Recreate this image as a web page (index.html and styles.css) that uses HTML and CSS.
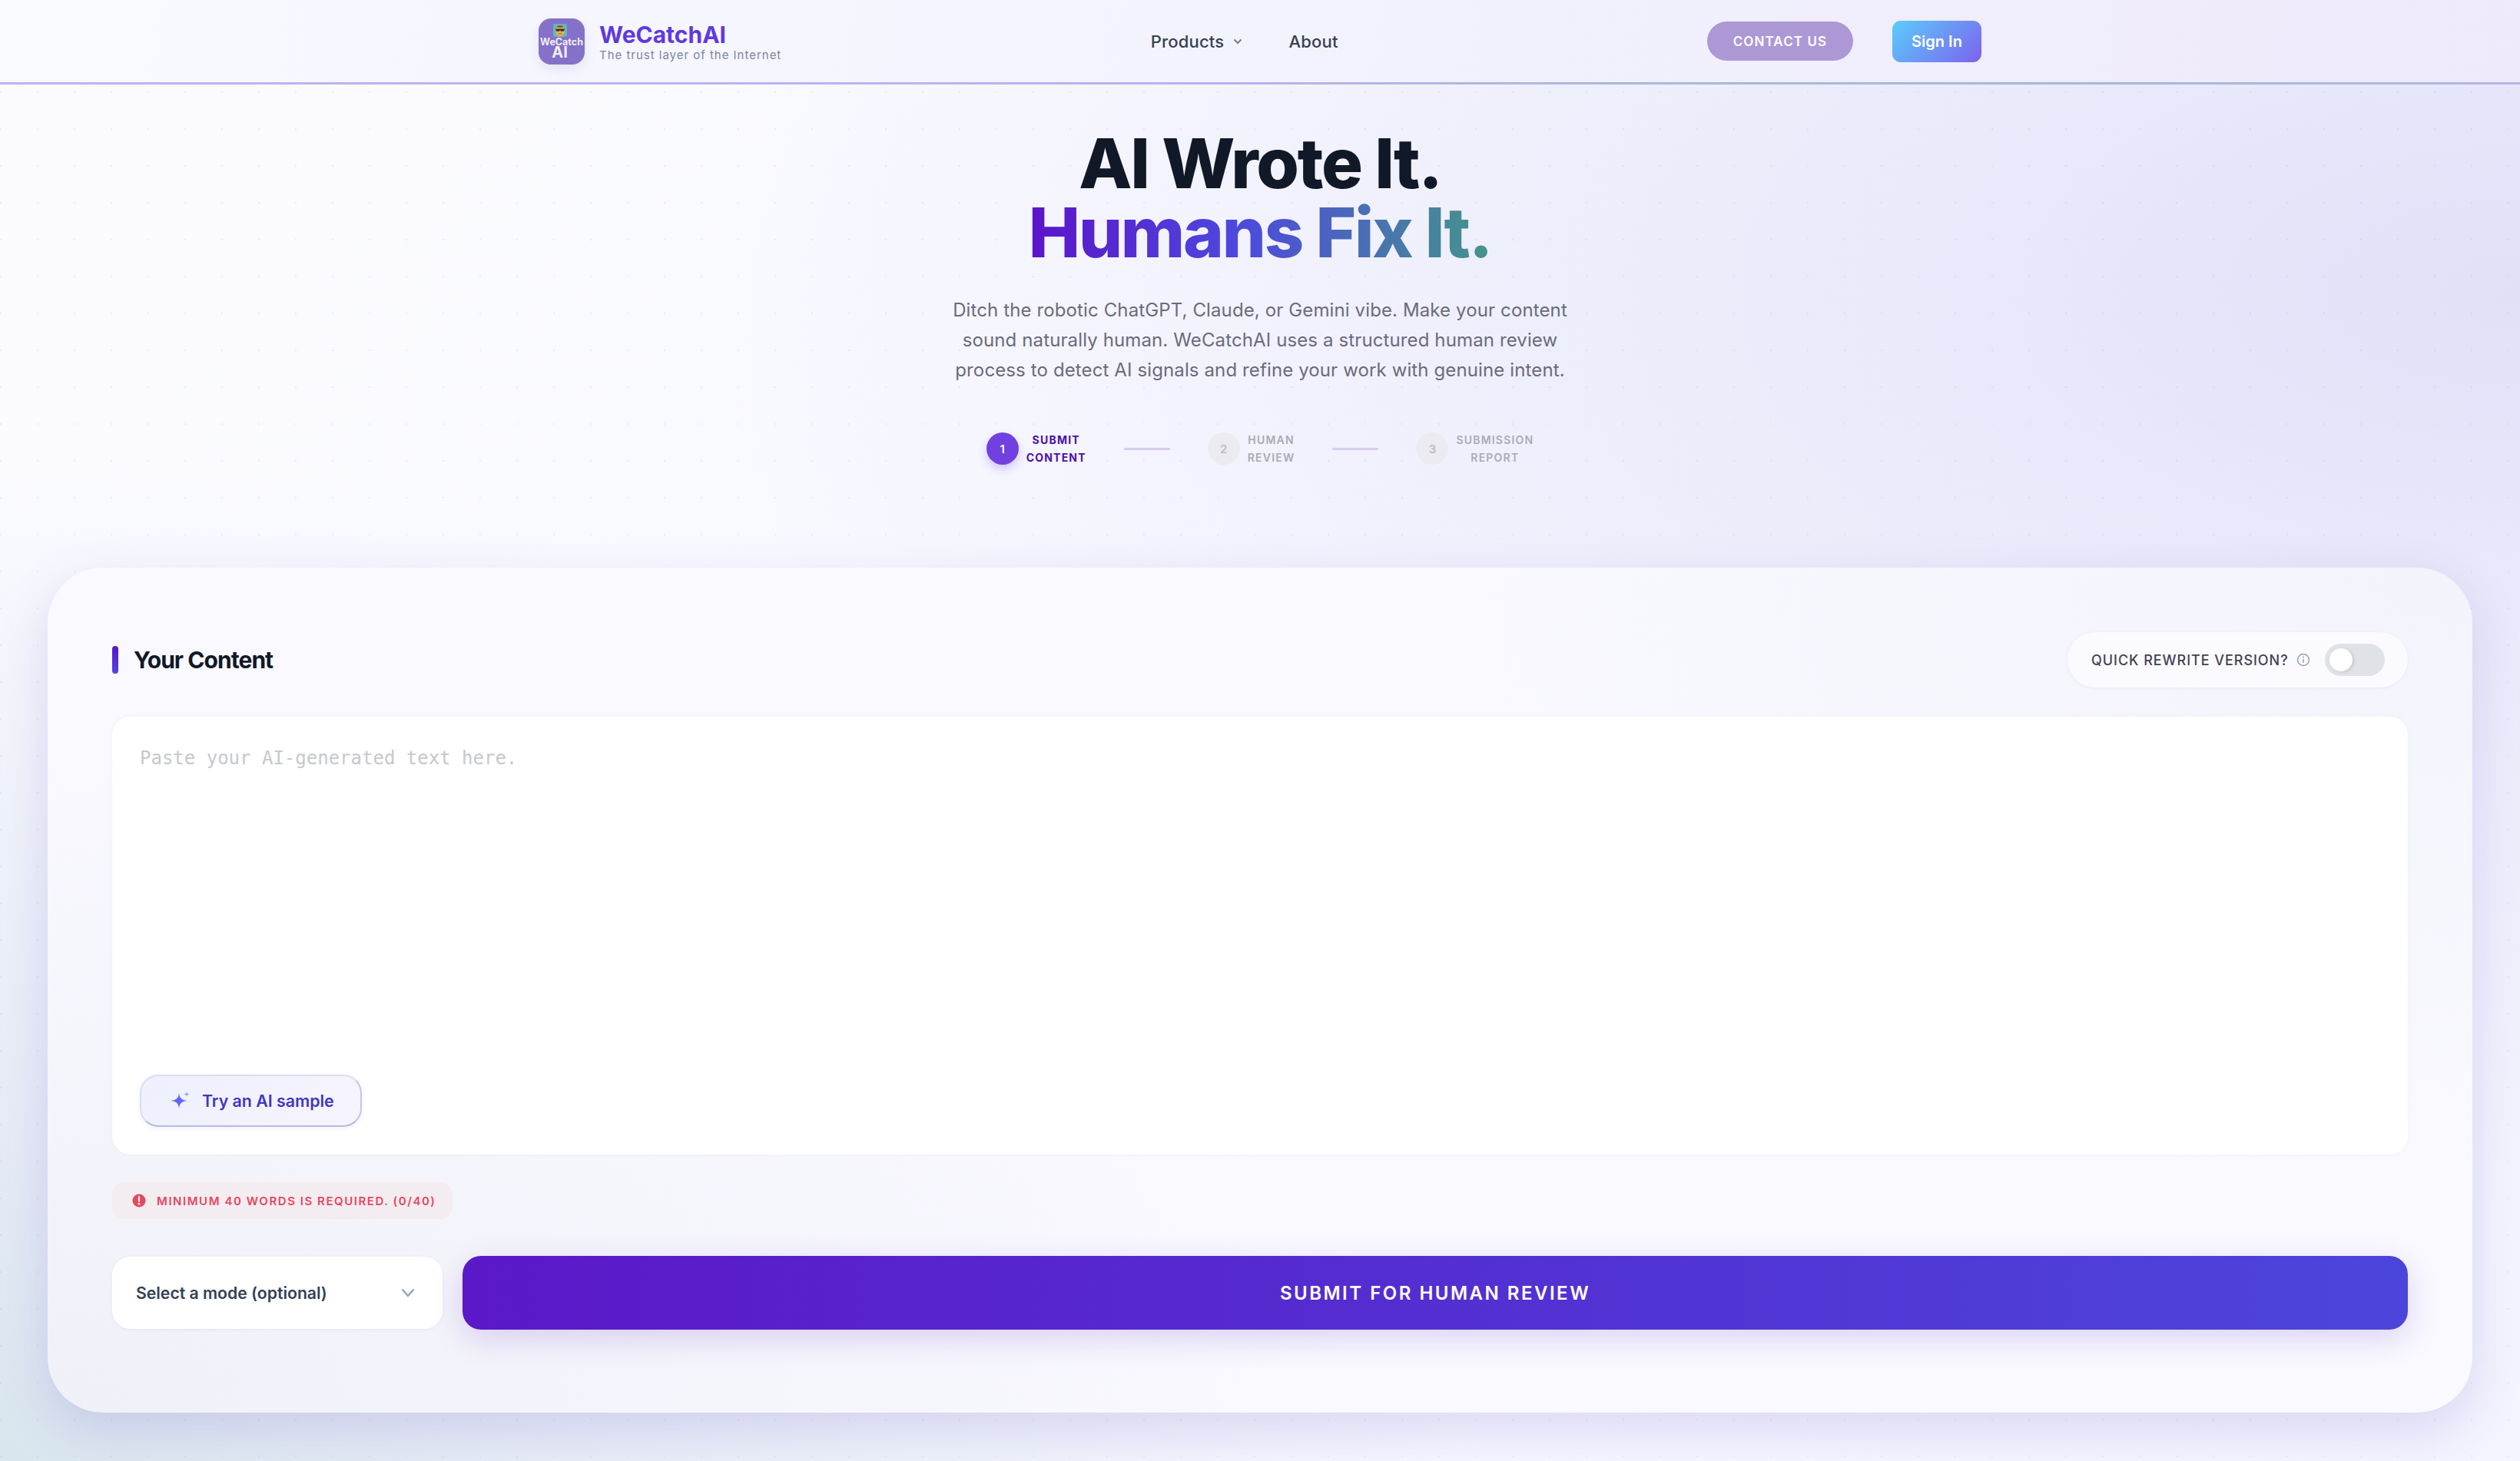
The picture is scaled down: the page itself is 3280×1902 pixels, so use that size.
FILE: index.html
```html
<!DOCTYPE html>
<html lang="en">
<head>
<meta charset="utf-8">
<title>WeCatchAI</title>
<link rel="stylesheet" href="styles.css">
</head>
<body>
<header class="topbar">
  <div class="topbar-inner">
    <a class="brand">
      <span class="logo">
        <svg class="logo-face" viewBox="0 0 18 17" width="18" height="17">
          <rect width="18" height="17" rx="3" fill="#62b5c6"/>
          <ellipse cx="9" cy="9" rx="6" ry="7" fill="#e8b63e"/>
          <path d="M4.500 4.600C5.500 1.600 12.500 1.600 13.500 4.600Z" fill="#5a4a2c"/>
          <path d="M3.200 6.400h11.600v1.400l-1 2H10.200L9 8.600 7.800 9.800H4.200l-1-2Z" fill="#3a3030"/>
          <path d="M6.500 12.800h5" stroke="#8a6a24" stroke-width="1"/>
        </svg>
        <span class="logo-name">WeCatch</span>
        <span class="logo-ai">AI</span>
      </span>
      <span class="brand-text">
        <span class="brand-name">WeCatchAI</span>
        <span class="brand-tag">The trust layer of the Internet</span>
      </span>
    </a>
    <nav class="nav">
      <a class="nav-link">Products
        <svg class="nav-chev" viewBox="0 0 12 8" width="12" height="8"><path d="M1.500 1.500 6 6l4.500-4.500" fill="none" stroke="#7b7b88" stroke-width="2"/></svg>
      </a>
      <a class="nav-link">About</a>
    </nav>
    <div class="actions">
      <a class="btn-contact">CONTACT US</a>
      <a class="btn-signin">Sign In</a>
    </div>
  </div>
</header>

<section class="hero">
  <h1 class="hero-title">AI Wrote It.<br><span class="hero-accent">Humans Fix It.</span></h1>
  <p class="hero-sub">Ditch the robotic ChatGPT, Claude, or Gemini vibe. Make your content<br>sound naturally human. WeCatchAI uses a structured human review<br>process to detect AI signals and refine your work with genuine intent.</p>
  <ol class="steps">
    <li class="step step-on"><span class="step-dot">1</span><span class="step-label">SUBMIT<br>CONTENT</span></li>
    <li class="step-line"></li>
    <li class="step"><span class="step-dot">2</span><span class="step-label">HUMAN<br>REVIEW</span></li>
    <li class="step-line"></li>
    <li class="step"><span class="step-dot">3</span><span class="step-label">SUBMISSION<br>REPORT</span></li>
  </ol>
</section>

<main class="card">
  <div class="card-head">
    <h2 class="card-title">Your Content</h2>
    <div class="quick">
      <span class="quick-label">QUICK REWRITE VERSION?</span>
      <svg class="quick-info" viewBox="0 0 18 18" width="18" height="18"><circle cx="9" cy="9" r="7.500" fill="none" stroke="#94a3b8" stroke-width="1.500"/><path d="M9 8v5" stroke="#94a3b8" stroke-width="1.500"/><circle cx="9" cy="5.500" r="1" fill="#94a3b8"/></svg>
      <span class="switch"><span class="knob"></span></span>
    </div>
  </div>

  <div class="editor">
    <textarea class="editor-input" placeholder="Paste your AI-generated text here."></textarea>
    <button class="sample" type="button">
      <svg viewBox="0 0 26 26" width="26" height="26"><path d="M11 3c.8 6.500 3 9 10.500 10C14 14 11.800 16.500 11 23c-.8-6.500-3-9-10.500-10C8 12 10.200 9.500 11 3Z" fill="#6366f1"/><path d="M21 .5c.3 2.700 1.100 3.600 4 4-2.900.4-3.700 1.300-4 4-.3-2.700-1.100-3.600-4-4 2.900-.4 3.700-1.300 4-4Z" fill="#a3a5f6"/></svg>
      <span>Try an AI sample</span>
    </button>
  </div>

  <div class="notice">
    <svg viewBox="0 0 18 18" width="18" height="18"><circle cx="9" cy="9" r="8.500" fill="#e5485f"/><path d="M9 4v6" stroke="#fff" stroke-width="2.200" stroke-linecap="round"/><circle cx="9" cy="13.300" r="1.300" fill="#fff"/></svg>
    <span>MINIMUM 40 WORDS IS REQUIRED. (0/40)</span>
  </div>

  <div class="submit-row">
    <div class="mode">
      <span>Select a mode (optional)</span>
      <svg viewBox="0 0 18 12" width="18" height="12"><path d="M1.500 1.500 9 10l7.500-8.500" fill="none" stroke="#94a3b8" stroke-width="2.400"/></svg>
    </div>
    <button class="submit" type="button">SUBMIT FOR HUMAN REVIEW</button>
  </div>
</main>
</body>
</html>
```
FILE: styles.css
```css
* { box-sizing: border-box; }
html, body { margin: 0; padding: 0; }
body {
  width: 100%;
  min-height: 1902px;
  font-family: Inter, "Liberation Sans", sans-serif;
  color: #111827;
  background-color: #f5f6fe;
  background-image:
    radial-gradient(circle at 1px 24px, rgba(110,110,160,.1) 1.2px, transparent 1.6px),
    radial-gradient(ellipse 1900px 1300px at 0% 100%, #d9e6ee 0%, rgba(222,230,242,.75) 30%, rgba(230,234,248,0) 100%),
    radial-gradient(ellipse 2400px 1200px at 100% 20%, #e0e1f7 0%, rgba(230,231,249,.65) 45%, rgba(238,239,252,0) 100%),
    linear-gradient(125deg, #fbfbff 0%, #f8f9ff 40%, #f3f4fe 100%);
  background-size: 48px 48px, auto, auto, auto;
  overflow-x: hidden;
}

/* top bar */
.topbar {
  height: 110px;
  border-bottom: 3px solid;
  border-image: linear-gradient(90deg, #bcb6ee 0%, #b6b4ec 50%, #a3b9d9 80%, #b4b6ea 100%) 1;
  background: linear-gradient(100deg, #f9faff 0%, #f1f2fd 55%, #efe9fb 100%);
}
.topbar-inner {
  width: 1878px;
  height: 107px;
  margin: 0 auto;
  display: flex;
  align-items: center;
  justify-content: space-between;
}
.brand { display: flex; align-items: center; gap: 19px; }
.logo {
  width: 60px;
  height: 60px;
  border-radius: 16px;
  background: #8671c9;
  box-shadow: 0 6px 16px rgba(100,80,200,.12);
  display: flex;
  flex-direction: column;
  align-items: center;
  padding-top: 7px;
  color: #efeff2;
  font-weight: 700;
}
.logo-face { display: block; flex: none; margin-right: 5px; }
.logo-name { font-size: 12.500px; line-height: 14px; }
.logo-ai { font-size: 20px; line-height: 19px; margin-top: -3px; margin-right: 5px; }
.brand-text { display: flex; flex-direction: column; padding-top: 2px; }
.brand-name { font-size: 30px; line-height: 34px; font-weight: 700; color: #6039de; }
.brand-tag { font-size: 15px; line-height: 20px; color: #7b879c; letter-spacing: .98px; }

.nav { display: flex; align-items: center; gap: 60px; }
.nav-link {
  display: flex;
  align-items: center;
  gap: 12px;
  font-size: 22px;
  font-weight: 500;
  letter-spacing: .2px;
  color: #374151;
}
.nav-chev { width: 12px; height: 8px; }

.actions { display: flex; align-items: center; gap: 51px; }
.btn-contact {
  width: 190px;
  height: 51px;
  border-radius: 26px;
  background: #ad98d6;
  color: #fff;
  font-size: 17px;
  font-weight: 600;
  letter-spacing: 1.100px;
  display: flex;
  align-items: center;
  justify-content: center;
}
.btn-signin {
  width: 116px;
  height: 54px;
  border-radius: 11px;
  background: linear-gradient(135deg, #5bcdfb 0%, #7c62ee 100%);
  color: #fff;
  font-size: 20px;
  font-weight: 600;
  display: flex;
  align-items: center;
  justify-content: center;
}

/* hero */
.hero { text-align: center; padding-top: 58px; }
.hero-title {
  margin: 0;
  font-size: 90px;
  line-height: 90px;
  font-weight: 800;
  letter-spacing: -2.250px;
  color: #111827;
}
.hero-accent {
  display: inline-block;
  background: linear-gradient(90deg, #5b14c8 0%, #4d48de 45%, #45958a 100%);
  -webkit-background-clip: text;
  background-clip: text;
  color: transparent;
}
.hero-sub {
  margin: 36px 0 0;
  font-size: 24px;
  line-height: 39px;
  letter-spacing: .12px;
  color: #6b6b7b;
}
.steps {
  list-style: none;
  margin: 60px 0 0;
  padding: 0;
  display: flex;
  justify-content: center;
  align-items: center;
  gap: 49px;
}
.step { display: flex; align-items: center; gap: 10px; }
.step-dot {
  width: 42px;
  height: 42px;
  border-radius: 50%;
  background: #ebebf0;
  color: #bcbcc4;
  font-size: 15px;
  font-weight: 600;
  display: flex;
  align-items: center;
  justify-content: center;
}
.step-label {
  font-size: 14px;
  line-height: 23px;
  font-weight: 600;
  letter-spacing: 1.200px;
  color: #aaaab4;
  text-align: center;
}
.step-on .step-dot { background: #7040e0; color: #fff; box-shadow: 0 6px 12px rgba(112,64,224,.25); }
.step-on .step-label { color: #4c0fa8; font-weight: 700; }
.step-line { width: 60px; height: 3px; background: #d6cdf0; }

/* card */
.card {
  margin: 132px 62px 63px;
  height: 1100px;
  border-radius: 72px;
  padding: 84px 84px 0;
  background:
    radial-gradient(ellipse 1700px 900px at 0% 100%, #f0f1f8 0%, rgba(240,241,248,0) 100%),
    radial-gradient(ellipse 1500px 800px at 100% 0%, #f3f4fb 0%, rgba(243,244,251,0) 100%),
    #f9f9ff;
  box-shadow: 0 22px 64px rgba(88,66,190,.17);
}
.card-head { display: flex; align-items: center; justify-content: space-between; height: 72px; }
.card-title {
  margin: 0;
  display: flex;
  align-items: center;
  gap: 20px;
  font-size: 30px;
  line-height: 36px;
  font-weight: 700;
  letter-spacing: -.95px;
  color: #111827;
}
.card-title::before {
  content: "";
  width: 8px;
  height: 36px;
  border-radius: 4px;
  background: linear-gradient(180deg, #5b14c8, #4f46e5);
}
.quick {
  height: 72px;
  width: 443px;
  padding: 0 30px 0 31px;
  border-radius: 36px;
  background: #fafaff;
  box-shadow: 0 1px 4px rgba(90,80,160,.08);
  display: flex;
  align-items: center;
}
.quick-label { font-size: 18px; font-weight: 500; letter-spacing: .95px; color: #45424f; white-space: nowrap; }
.quick-info { margin-left: 10px; flex: none; }
.switch {
  margin-left: auto;
  width: 78px;
  height: 42px;
  border-radius: 21px;
  background: #dfe2e6;
  padding: 6px;
  display: flex;
}
.knob { width: 30px; height: 30px; border-radius: 50%; background: #fff; box-shadow: 2px 1px 4px rgba(0,0,0,.12); }

.editor {
  margin-top: 38px;
  height: 570px;
  padding: 36px;
  border-radius: 24px;
  background: #fff;
  box-shadow: 0 0 6px rgba(90,80,160,.05);
  display: flex;
  flex-direction: column;
  align-items: flex-start;
}
.editor-input {
  flex: 1;
  width: 100%;
  display: block;
  border: 0;
  outline: 0;
  padding: 0;
  resize: none;
  background: transparent;
  font-family: "DejaVu Sans Mono", monospace;
  font-size: 24px;
  line-height: 36px;
}
.editor-input::placeholder { color: #c6c8ce; opacity: 1; }
.sample {
  width: 289px;
  height: 68px;
  padding: 0 0 0 38px;
  border: 2px solid #dcdcf4;
  border-right-color: #c4c5e4;
  border-bottom-color: #b9badc;
  border-radius: 24px;
  background: linear-gradient(135deg, #eef0fe, #f6f4fe);
  box-shadow: 0 2px 6px rgba(90,80,160,.08);
  display: flex;
  align-items: center;
  gap: 15px;
  font-family: inherit;
  font-size: 21.330px;
  font-weight: 600;
  color: #3f37c0;
}
.notice {
  margin-top: 36px;
  width: 443px;
  height: 48px;
  padding-left: 26px;
  border-radius: 16px;
  background: #f3ecf1;
  display: flex;
  align-items: center;
  gap: 14px;
  font-size: 15px;
  font-weight: 600;
  letter-spacing: 1.550px;
  color: #e5485f;
  white-space: nowrap;
}
.submit-row { margin-top: 48px; display: flex; align-items: center; gap: 26px; }
.mode {
  width: 430px;
  height: 94px;
  flex: none;
  padding: 0 36px 0 31px;
  border-radius: 24px;
  background: #fff;
  box-shadow: 0 1px 5px rgba(90,80,160,.08);
  display: flex;
  align-items: center;
  justify-content: space-between;
  font-size: 21.200px;
  font-weight: 600;
  color: #334155;
}
.submit {
  flex: 1;
  height: 96px;
  border: 0;
  border-radius: 24px;
  background: linear-gradient(90deg, #5b18c8 0%, #4c45db 100%);
  box-shadow: 0 12px 40px rgba(91,33,182,.18);
  color: #fff;
  font-family: inherit;
  font-size: 24px;
  font-weight: 600;
  letter-spacing: 2.500px;
}
```
